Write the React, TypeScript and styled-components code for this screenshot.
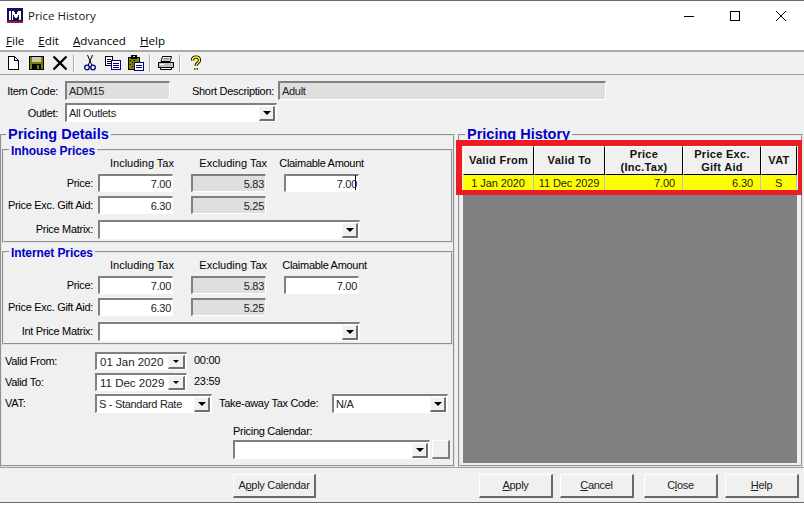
import React from "react"
import styled, { createGlobalStyle } from "styled-components"

const GlobalStyle = createGlobalStyle`
  html, body {
    margin: 0;
    padding: 0;
    background: #fff;
  }
  * {
    box-sizing: border-box;
  }
`

const Window = styled.div`
  width: 804px;
  height: 506px;
  display: flex;
  flex-direction: column;
  overflow: hidden;
  background: #fff;
  font-family: "Liberation Sans", Arial, sans-serif;
  font-size: 11px;
  letter-spacing: -0.3px;
  color: #000;
`

const TitleBar = styled.div`
  height: 30px;
  flex: none;
  display: flex;
  align-items: center;
  border-top: 1px solid #6a6a6a;
  padding-left: 7px;
  font-family: "Open Sans", sans-serif;
  font-size: 11.5px;
  letter-spacing: 0;
`

const TitleText = styled.span`
  margin-left: 5px;
  color: #1a1a1a;
`

const WindowControls = styled.div`
  margin-left: auto;
  display: flex;
`

const WindowControl = styled.div`
  width: 46px;
  height: 29px;
  display: flex;
  align-items: center;
  justify-content: center;
`

const MenuBar = styled.div`
  height: 20px;
  flex: none;
  display: flex;
  align-items: center;
  gap: 14px;
  padding-left: 6px;
  font-family: "Open Sans", sans-serif;
  font-size: 11.6px;
  letter-spacing: 0;
  u {
    text-underline-offset: 1px;
  }
`

const Toolbar = styled.div`
  height: 25px;
  flex: none;
  display: flex;
  align-items: center;
  padding-left: 2px;
  background: #f0f0f0;
  border-top: 2px solid #a9a9a9;
  border-bottom: 1px solid #a0a0a0;
`

const ToolButton = styled.div`
  width: 23px;
  height: 21px;
  display: flex;
  align-items: center;
  justify-content: center;
`

const ToolSeparator = styled.div`
  width: 2px;
  height: 17px;
  margin: 0 3px 0 2px;
  background: #a6a6a6;
  border-right: 1px solid #fff;
`

const Body = styled.div`
  flex: 1;
  min-height: 0;
  display: flex;
  flex-direction: column;
  background: #f0f0f0;
`

const ItemForm = styled.div`
  height: 51px;
  flex: none;
  display: flex;
  flex-direction: column;
  gap: 3px;
  padding-top: 6px;
`

const ItemRow = styled.div`
  display: flex;
  align-items: center;
`

const ItemLabel = styled.span<{ $width: number; $pad: number }>`
  width: ${(p) => p.$width}px;
  padding-right: ${(p) => p.$pad}px;
  text-align: right;
  white-space: nowrap;
`

const Sunken = styled.div<{ $width?: number; $readOnly?: boolean; $height?: number }>`
  width: ${(p) => (p.$width ? `${p.$width}px` : "100%")};
  height: ${(p) => p.$height || 19}px;
  flex: none;
  display: flex;
  align-items: center;
  padding: 0 1px 0 2px;
  background: ${(p) => (p.$readOnly ? "#dfdfdf" : "#fff")};
  border-style: solid;
  border-width: 2px 1px 1px 2px;
  border-color: #808080 #fff #fff #808080;
  white-space: nowrap;
  overflow: hidden;
  color: #222;
`

const NumberBox = styled(Sunken)`
  justify-content: flex-end;
  padding-right: 1px;
  height: 18px;
`

const Caret = styled.span`
  position: absolute;
  top: 1px;
  right: 3px;
  width: 1px;
  height: 15px;
  background: #000;
`

const CaretWrap = styled.div`
  position: relative;
  width: 75px;
`

const DateValue = styled.span`
  padding-left: 1px;
  font-size: 11.5px;
  letter-spacing: 0;
`

const DropButton = styled.div<{ $small?: boolean }>`
  margin-left: auto;
  width: ${(p) => (p.$small ? 17 : 16)}px;
  height: ${(p) => (p.$small ? 14 : 15)}px;
  flex: none;
  display: flex;
  align-items: center;
  justify-content: center;
  background: #f0f0f0;
  border-style: solid;
  border-width: 1px 2px 2px 1px;
  border-color: #f8f8f8 #707070 #707070 #f8f8f8;
  &::after {
    content: "";
    border-style: solid;
    border-color: #000 transparent transparent;
    border-width: ${(p) => (p.$small ? "3px 3px 0" : "4px 4px 0")};
  }
`

const Columns = styled.div`
  flex: 1;
  min-height: 0;
  display: flex;
  gap: 3px;
  padding-right: 1px;
`

const Group = styled.fieldset<{ $width?: number }>`
  margin: 0;
  padding: 0;
  min-width: 0;
  ${(p) => (p.$width ? `width: ${p.$width}px;` : "flex: 1;")}
  border: 2px groove #e4e4e4;
`

const GroupTitle = styled.legend<{ $inset: number }>`
  margin-left: ${(p) => p.$inset}px;
  padding: 0 2px;
  height: 17px;
  line-height: 17px;
  color: #0000c8;
  font-size: 14.5px;
  font-weight: 700;
  letter-spacing: 0;
`

const SubGroup = styled.fieldset`
  margin: 0 0 2px;
  padding: 0 0 2px;
  min-width: 0;
  border: 2px groove #e4e4e4;
`

const SubGroupTitle = styled.legend`
  margin-left: 5px;
  padding: 1px 2px 0;
  height: 14px;
  line-height: 14px;
  color: #0000c8;
  font-size: 12px;
  font-weight: 700;
  letter-spacing: -0.1px;
`

const PriceGrid = styled.div`
  display: grid;
  grid-template-columns: 94px 93px 93px 76px;
  grid-template-rows: 17px 22px 24px 19px;
  align-items: start;
`

const ColumnHeading = styled.div<{ $centered?: boolean; $shift?: number }>`
  width: 75px;
  display: flex;
  justify-content: ${(p) => (p.$centered ? "center" : "flex-end")};
  margin-left: ${(p) => (p.$centered ? p.$shift || 0 : 1)}px;
  letter-spacing: ${(p) => (p.$centered ? "-0.3px" : "0")};
  white-space: nowrap;
`

const FieldLabel = styled.div`
  height: 18px;
  line-height: 18px;
  padding-right: 5px;
  text-align: right;
  white-space: nowrap;
`

const WideCell = styled.div`
  grid-column: 2 / span 3;
  width: 262px;
`

const DateArea = styled.div`
  display: flex;
  flex-direction: column;
  padding: 5px 0 0 3px;
`

const DateRow = styled.div`
  height: 21px;
  display: flex;
  align-items: flex-start;
`

const DateLabel = styled.div`
  width: 90px;
  height: 18px;
  line-height: 18px;
  white-space: nowrap;
`

const TimeText = styled.div`
  margin-left: 7px;
  line-height: 16px;
`

const TaxLabel = styled.div`
  width: 120px;
  padding-left: 7px;
  line-height: 19px;
  white-space: nowrap;
`

const CalendarBlock = styled.div`
  margin: 9px 0 0 228px;
`

const CalendarLabel = styled.div`
  line-height: 15px;
  margin-bottom: 1px;
`

const CalendarRow = styled.div`
  display: flex;
  gap: 2px;
`

const SmallButton = styled.div`
  width: 18px;
  height: 19px;
  background: #f0f0f0;
  border-style: solid;
  border-width: 1px 2px 2px 1px;
  border-color: #fff #808080 #808080 #fff;
`

const HistoryFrame = styled.div`
  position: relative;
  margin: 3px 4px 1px 3px;
  height: 317px;
  background: #808080;
`

const HistoryGrid = styled.div`
  display: grid;
  grid-template-columns: 71px 71px 78px 78px 36px;
  grid-template-rows: 29px 15px;
`

const HeaderCell = styled.div`
  display: flex;
  align-items: center;
  justify-content: center;
  text-align: center;
  line-height: 13px;
  font-size: 11px;
  font-weight: 700;
  letter-spacing: 0.3px;
  color: #111;
  background: #f0f0f0;
  border-right: 1px solid #000;
  border-bottom: 1px solid #000;
  border-top: 1px solid #fff;
  border-left: 1px solid #fff;
`

const DataCell = styled.div<{ $align: string }>`
  display: flex;
  align-items: center;
  justify-content: ${(p) => p.$align};
  padding: 0 7px;
  background: #ffff00;
  border-right: 1px solid #c0c0c0;
  white-space: nowrap;
  color: #222;
  letter-spacing: -0.1px;
`

const Highlight = styled.div`
  position: absolute;
  left: 456px;
  top: 140px;
  width: 346px;
  height: 55px;
  border-style: solid;
  border-color: #ed1c24;
  border-width: 6px 4px 5px 6px;
  pointer-events: none;
`

const Footer = styled.div`
  height: 36px;
  flex: none;
  margin-bottom: 3px;
  display: flex;
  align-items: center;
  padding: 1px 0 0 233px;
  background: #f0f0f0;
  border-top: 1px solid #a0a0a0;
  border-bottom: 1px solid #696969;
`

const PushButton = styled.div<{ $width?: number; $gapLeft?: number }>`
  width: ${(p) => p.$width || 74}px;
  height: 24px;
  margin-left: ${(p) => p.$gapLeft || 0}px;
  display: flex;
  align-items: center;
  justify-content: center;
  background: #f0f0f0;
  border-style: solid;
  border-width: 1px 2px 2px 1px;
  border-color: #fff #696969 #696969 #fff;
  white-space: nowrap;
  color: #222;
`

const Logo = () => (
  <svg width="16" height="15" viewBox="0 0 16 15" shapeRendering="crispEdges">
    <rect width="16" height="15" fill="#10105c" />
    <rect x="2" y="3" width="2" height="9" fill="#fff" />
    <path d="M5 3h2l2 4 2-4h3v9h-2V6l-2 4H8L6 6v6H5z" fill="#fff" />
    <rect y="13" width="16" height="2" fill="#a01840" />
  </svg>
)

const NewIcon = () => (
  <svg width="16" height="16" viewBox="0 0 16 16" shapeRendering="crispEdges">
    <path d="M2.500 1.500h6l4 4v9h-10z" fill="#fff" stroke="#000" />
    <path d="M8.500 1.500v4h4" fill="none" stroke="#000" />
  </svg>
)

const SaveIcon = () => (
  <svg width="16" height="16" viewBox="0 0 16 16" shapeRendering="crispEdges">
    <rect x="0" y="1" width="15" height="14" fill="#000" />
    <rect x="1" y="2" width="13" height="12" fill="#808000" />
    <rect x="3" y="2" width="9" height="5" fill="#c8c8b0" />
    <rect x="3" y="9" width="9" height="6" fill="#000" />
    <rect x="8" y="10" width="2" height="4" fill="#808000" />
  </svg>
)

const DeleteIcon = () => (
  <svg width="16" height="16" viewBox="0 0 16 16">
    <path d="M1.500 1.500l13 13M14.500 1.500l-13 13" stroke="#000" strokeWidth="2.400" fill="none" />
  </svg>
)

const CutIcon = () => (
  <svg width="16" height="16" viewBox="0 0 16 16">
    <path d="M5.500 0l4.200 10M10.500 0L6.300 10" stroke="#000" strokeWidth="1" fill="none" />
    <circle cx="5" cy="12.500" r="2.300" stroke="#000080" strokeWidth="1.300" fill="none" />
    <circle cx="11" cy="12.500" r="2.300" stroke="#000080" strokeWidth="1.300" fill="none" />
  </svg>
)

const CopyIcon = () => (
  <svg width="16" height="16" viewBox="0 0 16 16" shapeRendering="crispEdges">
    <path d="M0.500 1.500h7v9h-7z" fill="#fff" stroke="#000" />
    <path d="M2 4h4M2 6h4M2 8h4" stroke="#000" />
    <path d="M6.500 5.500h9v9h-9z" fill="#fff" stroke="#000080" />
    <path d="M8 8h6M8 10h6M8 12h6" stroke="#000080" />
  </svg>
)

const PasteIcon = () => (
  <svg width="16" height="16" viewBox="0 0 16 16" shapeRendering="crispEdges">
    <rect x="0" y="2" width="12" height="13" fill="#000" />
    <rect x="1" y="3" width="10" height="11" fill="#808000" />
    <path d="M2 5h1v1H2zM4 7h1v1H4zM2 9h1v1H2zM4 11h1v1H4zM6 5h1v1H6z" fill="#000" />
    <rect x="3" y="0" width="6" height="4" fill="#000" />
    <rect x="5" y="1" width="2" height="1" fill="#c0c0c0" />
    <path d="M6.500 7.500h9v8h-9z" fill="#fff" stroke="#000080" />
    <path d="M8 10h6M8 12h6" stroke="#000080" />
  </svg>
)

const PrintIcon = () => (
  <svg width="16" height="16" viewBox="0 0 16 16">
    <path d="M4.500 1.500h9l-1.500 5h-9z" fill="#fff" stroke="#000" />
    <path d="M5.500 3.500h6M5 5h6" stroke="#808080" />
    <path d="M0.500 7.500h15v5h-15z" fill="#c0c0c0" stroke="#000" />
    <path d="M2.500 12.500h11v2h-11z" fill="#fff" stroke="#000" />
    <path d="M2 9.500h4" stroke="#fff" />
  </svg>
)

const HelpIcon = () => (
  <svg width="12" height="17" viewBox="0 0 12 17">
    <path d="M2.500 5.500C2.500 3 4 2 6 2s3.500 1 3.500 3.200c0 2.800-3.500 2.800-3.500 5.600M6 13v2" fill="none" stroke="#000" strokeWidth="3.200" />
    <path d="M2.500 5.500C2.500 3 4 2 6 2s3.500 1 3.500 3.200c0 2.800-3.500 2.800-3.500 5.600M6 13v2" fill="none" stroke="#ffff00" strokeWidth="1.400" />
  </svg>
)

const Combo = ({ width, text }: { width?: number; text?: string }) => (
  <Sunken $width={width}>
    {text}
    <DropButton />
  </Sunken>
)

const DatePicker = ({ value }: { value: string }) => (
  <Sunken $width={92} $height={18}>
    <DateValue>{value}</DateValue>
    <DropButton $small />
  </Sunken>
)

const PriceGroup = ({
  title,
  matrixLabel,
  focused,
  claimShift,
}: {
  title: string
  matrixLabel: string
  focused?: boolean
  claimShift?: number
}) => (
  <SubGroup>
    <SubGroupTitle>{title}</SubGroupTitle>
    <PriceGrid>
      <span />
      <ColumnHeading>Including Tax</ColumnHeading>
      <ColumnHeading>Excluding Tax</ColumnHeading>
      <ColumnHeading $centered $shift={claimShift}>Claimable Amount</ColumnHeading>

      <FieldLabel>Price:</FieldLabel>
      <NumberBox $width={75}>7.00</NumberBox>
      <NumberBox $width={75} $readOnly>5.83</NumberBox>
      <CaretWrap>
        <NumberBox $width={75}>7.00</NumberBox>
        {focused && <Caret />}
      </CaretWrap>

      <FieldLabel>Price Exc. Gift Aid:</FieldLabel>
      <NumberBox $width={75}>6.30</NumberBox>
      <NumberBox $width={75} $readOnly>5.25</NumberBox>
      <span />

      <FieldLabel>{matrixLabel}</FieldLabel>
      <WideCell>
        <Combo />
      </WideCell>
    </PriceGrid>
  </SubGroup>
)

export default function App() {
  return (
    <Window>
      <GlobalStyle />
      <TitleBar>
        <Logo />
        <TitleText>Price History</TitleText>
        <WindowControls>
          <WindowControl>
            <svg width="10" height="10" viewBox="0 0 10 10" shapeRendering="crispEdges">
              <rect y="5" width="10" height="1" fill="#000" />
            </svg>
          </WindowControl>
          <WindowControl>
            <svg width="10" height="10" viewBox="0 0 10 10" shapeRendering="crispEdges">
              <rect x="0.5" y="0.5" width="9" height="9" fill="none" stroke="#000" />
            </svg>
          </WindowControl>
          <WindowControl>
            <svg width="10" height="10" viewBox="0 0 10 10">
              <path d="M0 0l10 10M10 0L0 10" stroke="#000" strokeWidth="1" />
            </svg>
          </WindowControl>
        </WindowControls>
      </TitleBar>

      <MenuBar>
        <span><u>F</u>ile</span>
        <span><u>E</u>dit</span>
        <span><u>A</u>dvanced</span>
        <span><u>H</u>elp</span>
      </MenuBar>

      <Toolbar>
        <ToolButton><NewIcon /></ToolButton>
        <ToolButton><SaveIcon /></ToolButton>
        <ToolButton><DeleteIcon /></ToolButton>
        <ToolSeparator />
        <ToolButton><CutIcon /></ToolButton>
        <ToolButton><CopyIcon /></ToolButton>
        <ToolButton><PasteIcon /></ToolButton>
        <ToolSeparator />
        <ToolButton><PrintIcon /></ToolButton>
        <ToolSeparator />
        <ToolButton><HelpIcon /></ToolButton>
      </Toolbar>

      <Body>
        <ItemForm>
          <ItemRow>
            <ItemLabel $width={65} $pad={7}>Item Code:</ItemLabel>
            <Sunken $width={105} $readOnly>ADM15</Sunken>
            <ItemLabel $width={108} $pad={4}>Short Description:</ItemLabel>
            <Sunken $width={328} $readOnly>Adult</Sunken>
          </ItemRow>
          <ItemRow>
            <ItemLabel $width={65} $pad={7}>Outlet:</ItemLabel>
            <Combo width={212} text="All Outlets" />
          </ItemRow>
        </ItemForm>

        <Columns>
          <Group $width={455}>
            <GroupTitle $inset={4}>Pricing Details</GroupTitle>
            <PriceGroup title="Inhouse Prices" matrixLabel="Price Matrix:" focused />
            <PriceGroup title="Internet Prices" matrixLabel="Int Price Matrix:" claimShift={3} />
            <DateArea>
              <DateRow>
                <DateLabel>Valid From:</DateLabel>
                <DatePicker value="01 Jan 2020" />
                <TimeText>00:00</TimeText>
              </DateRow>
              <DateRow>
                <DateLabel>Valid To:</DateLabel>
                <DatePicker value="11 Dec 2029" />
                <TimeText>23:59</TimeText>
              </DateRow>
              <DateRow>
                <DateLabel>VAT:</DateLabel>
                <Combo width={117} text="S - Standard Rate" />
                <TaxLabel>Take-away Tax Code:</TaxLabel>
                <Combo width={116} text="N/A" />
              </DateRow>
              <CalendarBlock>
                <CalendarLabel>Pricing Calendar:</CalendarLabel>
                <CalendarRow>
                  <Combo width={197} />
                  <SmallButton />
                </CalendarRow>
              </CalendarBlock>
            </DateArea>
          </Group>

          <Group>
            <GroupTitle $inset={5}>Pricing History</GroupTitle>
            <HistoryFrame>
              <HistoryGrid>
                <HeaderCell>Valid From</HeaderCell>
                <HeaderCell>Valid To</HeaderCell>
                <HeaderCell>Price<br />(Inc.Tax)</HeaderCell>
                <HeaderCell>Price Exc.<br />Gift Aid</HeaderCell>
                <HeaderCell>VAT</HeaderCell>
                <DataCell $align="center">1 Jan 2020</DataCell>
                <DataCell $align="center">11 Dec 2029</DataCell>
                <DataCell $align="flex-end">7.00</DataCell>
                <DataCell $align="flex-end">6.30</DataCell>
                <DataCell $align="center">S</DataCell>
              </HistoryGrid>
            </HistoryFrame>
          </Group>
        </Columns>
      </Body>

      <Footer>
        <PushButton $width={83}>A<u>p</u>ply Calendar</PushButton>
        <PushButton $gapLeft={163}><u>A</u>pply</PushButton>
        <PushButton $gapLeft={7}><u>C</u>ancel</PushButton>
        <PushButton $gapLeft={10}>C<u>l</u>ose</PushButton>
        <PushButton $gapLeft={7}><u>H</u>elp</PushButton>
      </Footer>

      <Highlight />
    </Window>
  )
}
